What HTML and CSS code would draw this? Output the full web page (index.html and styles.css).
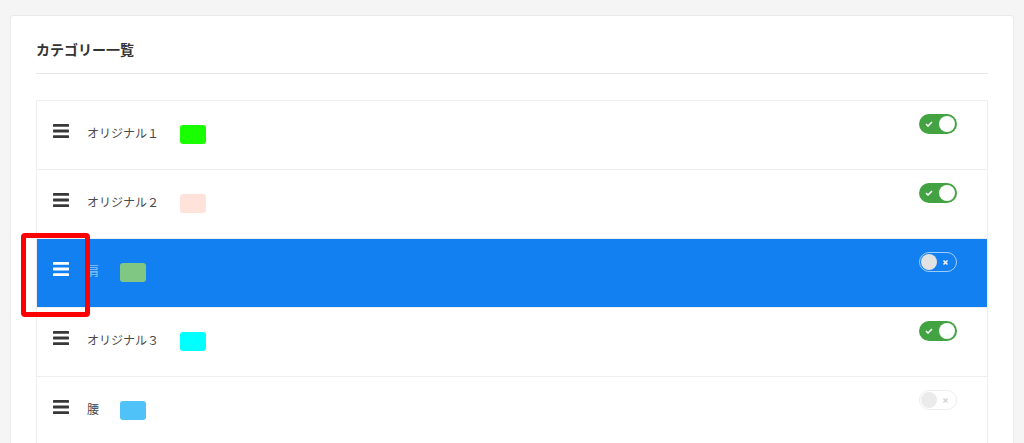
FILE: index.html
```html
<!DOCTYPE html>
<html lang="ja">
<head>
    <meta charset="UTF-8">
    <meta name="viewport" content="width=device-width, initial-scale=1.0">
    <title>カテゴリー一覧</title>
    <link rel="stylesheet" href="styles.css">
</head>
<body>
    <div class="card">
        <div class="card-header">カテゴリー一覧</div>
        <div class="category-list">
            <div class="category-row">
                <div class="row-left">
                    <svg class="handle" width="16" height="14" viewBox="0 0 16 14"><rect y="0" width="16" height="2.8" rx="0.6"/><rect y="5.6" width="16" height="2.8" rx="0.6"/><rect y="11.2" width="16" height="2.8" rx="0.6"/></svg>
                    <span class="name">オリジナル１</span>
                    <span class="swatch" style="background:#1aff00"></span>
                </div>
                <span class="toggle on"><svg class="mark" width="8" height="6" viewBox="0 0 8 6"><path d="M1 3l2 2 4-4" fill="none" stroke="#fff" stroke-width="1.6"/></svg><span class="knob"></span></span>
            </div>
            <div class="category-row">
                <div class="row-left">
                    <svg class="handle" width="16" height="14" viewBox="0 0 16 14"><rect y="0" width="16" height="2.8" rx="0.6"/><rect y="5.6" width="16" height="2.8" rx="0.6"/><rect y="11.2" width="16" height="2.8" rx="0.6"/></svg>
                    <span class="name">オリジナル２</span>
                    <span class="swatch" style="background:#ffe2da"></span>
                </div>
                <span class="toggle on"><svg class="mark" width="8" height="6" viewBox="0 0 8 6"><path d="M1 3l2 2 4-4" fill="none" stroke="#fff" stroke-width="1.6"/></svg><span class="knob"></span></span>
            </div>
            <div class="category-row dragging">
                <div class="row-left">
                    <svg class="handle" width="16" height="14" viewBox="0 0 16 14"><rect y="0" width="16" height="2.8" rx="0.6"/><rect y="5.6" width="16" height="2.8" rx="0.6"/><rect y="11.2" width="16" height="2.8" rx="0.6"/></svg>
                    <span class="name">肩</span>
                    <span class="swatch" style="background:#81c784"></span>
                </div>
                <span class="toggle off"><span class="knob"></span><svg class="mark" width="7" height="7" viewBox="0 0 7 7"><path d="M1.5 1.5l4 4M5.5 1.5l-4 4" fill="none" stroke="currentColor" stroke-width="1.6"/></svg></span>
                <div class="highlight"></div>
            </div>
            <div class="category-row">
                <div class="row-left">
                    <svg class="handle" width="16" height="14" viewBox="0 0 16 14"><rect y="0" width="16" height="2.8" rx="0.6"/><rect y="5.6" width="16" height="2.8" rx="0.6"/><rect y="11.2" width="16" height="2.8" rx="0.6"/></svg>
                    <span class="name">オリジナル３</span>
                    <span class="swatch" style="background:#00ffff"></span>
                </div>
                <span class="toggle on"><svg class="mark" width="8" height="6" viewBox="0 0 8 6"><path d="M1 3l2 2 4-4" fill="none" stroke="#fff" stroke-width="1.6"/></svg><span class="knob"></span></span>
            </div>
            <div class="category-row">
                <div class="row-left">
                    <svg class="handle" width="16" height="14" viewBox="0 0 16 14"><rect y="0" width="16" height="2.8" rx="0.6"/><rect y="5.6" width="16" height="2.8" rx="0.6"/><rect y="11.2" width="16" height="2.8" rx="0.6"/></svg>
                    <span class="name">腰</span>
                    <span class="swatch" style="background:#4fc3f7"></span>
                </div>
                <span class="toggle off disabled"><span class="knob"></span><svg class="mark" width="7" height="7" viewBox="0 0 7 7"><path d="M1.5 1.5l4 4M5.5 1.5l-4 4" fill="none" stroke="currentColor" stroke-width="1.6"/></svg></span>
            </div>
        </div>
    </div>
</body>
</html>
```

FILE: styles.css
```css
body {
    margin: 0;
    padding: 15px 10px 0;
    background: #f5f5f5;
    font-family: "Noto Sans CJK JP", "Noto Sans", sans-serif;
    color: #333;
    overflow: hidden;
}
.card {
    background: #fff;
    border: 1px solid #e7ebeb;
    border-radius: 3px;
    padding: 0 25px 40px;
    height: 600px;
}
.card-header {
    padding: 23px 0 14px;
    font-size: 14px;
    line-height: 20px;
    font-weight: bold;
    color: #333;
    border-bottom: 1px solid #e6e9e9;
}
.category-list {
    margin-top: 26px;
    border: 1px solid #eeeeee;
    border-bottom: none;
}
.category-row {
    position: relative;
    display: flex;
    justify-content: space-between;
    align-items: flex-start;
    height: 55px;
    padding: 13px 30px 0 16px;
    border-bottom: 1px solid #eeeeee;
    background: #fff;
}
.row-left {
    display: flex;
    align-items: flex-start;
    margin-top: 10px;
}
.handle {
    fill: #383838;
    display: block;
}
.name {
    margin-left: 18px;
    font-size: 12px;
    line-height: 18px;
    color: #4a4a4a;
}
.swatch {
    margin-left: 21px;
    margin-top: 1px;
    width: 26px;
    height: 19px;
    border-radius: 3px;
}
.toggle {
    display: flex;
    align-items: center;
    justify-content: space-between;
    width: 38px;
    height: 20px;
    border-radius: 10px;
    box-sizing: border-box;
    padding: 0 2px 0 6px;
}
.toggle .knob {
    width: 16px;
    height: 16px;
    border-radius: 50%;
    background: #fff;
}
.toggle .mark {
    display: block;
}
.toggle.on {
    background: #43a343;
}
.toggle.off {
    border: 1px solid #e4e4e4;
    padding: 0 7px 0 1px;
    color: #bbb;
}
.toggle.off .knob {
    background: #dedede;
}
.toggle.disabled {
    opacity: 0.6;
}
.category-row.dragging {
    background: #1380f1;
}
.dragging .handle {
    fill: #fff;
}
.dragging .name {
    color: rgba(255, 255, 255, 0.55);
}
.dragging .toggle.off {
    border-color: rgba(255, 255, 255, 0.6);
    color: #f2f2f2;
}
.dragging .toggle.off .knob {
    background: #e2e2e2;
}
.highlight {
    position: absolute;
    z-index: 2;
    left: -16px;
    top: -6px;
    width: 59px;
    height: 74px;
    border: 5px solid #ff0000;
    border-radius: 4px;
    pointer-events: none;
}
```
